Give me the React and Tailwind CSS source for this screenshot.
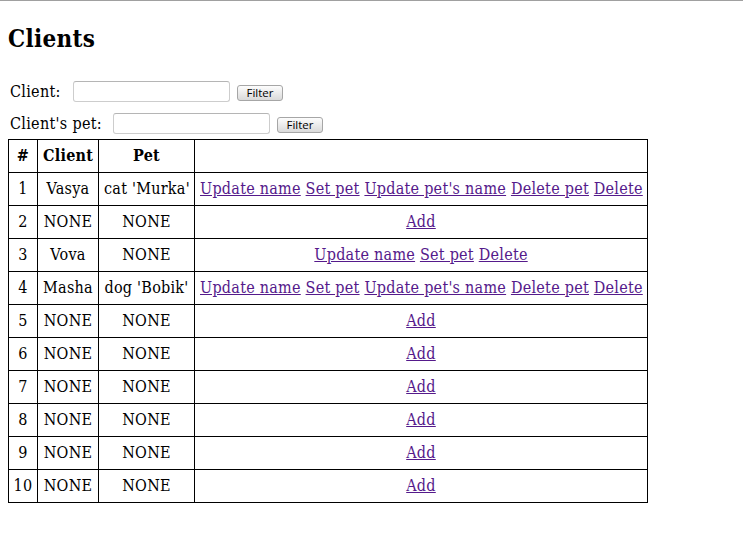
const rows = [
  { id: 1, client: 'Vasya', pet: "cat 'Murka'", actions: ['Update name', 'Set pet', "Update pet's name", 'Delete pet', 'Delete'] },
  { id: 2, client: 'NONE', pet: 'NONE', actions: ['Add'] },
  { id: 3, client: 'Vova', pet: 'NONE', actions: ['Update name', 'Set pet', 'Delete'] },
  { id: 4, client: 'Masha', pet: "dog 'Bobik'", actions: ['Update name', 'Set pet', "Update pet's name", 'Delete pet', 'Delete'] },
  { id: 5, client: 'NONE', pet: 'NONE', actions: ['Add'] },
  { id: 6, client: 'NONE', pet: 'NONE', actions: ['Add'] },
  { id: 7, client: 'NONE', pet: 'NONE', actions: ['Add'] },
  { id: 8, client: 'NONE', pet: 'NONE', actions: ['Add'] },
  { id: 9, client: 'NONE', pet: 'NONE', actions: ['Add'] },
  { id: 10, client: 'NONE', pet: 'NONE', actions: ['Add'] },
];

const cell = 'border border-black px-[5px] py-[5px] leading-[22px] text-center whitespace-nowrap tracking-[0.25px]';

const FilterRow = ({ label, labelW, className = '' }) => (
  <div className={'flex items-center h-[21px] ' + className}>
    <label className="ml-[2px] text-[16px] shrink-0 tracking-[0.3px]" style={{ width: labelW }}>{label}</label>
    <input
      type="text"
      className="w-[157px] h-[21px] border border-[#cdcdcd] border-t-[#b5b5b5] rounded-[3px] bg-white outline-none"
    />
    <button
      className="ml-[7px] mt-[3px] w-[46px] h-[16px] rounded-[3px] border border-[#a6a6a6] bg-gradient-to-b from-[#fdfdfd] to-[#dadada] text-[11.5px] leading-[14px] text-black"
      style={{ fontFamily: '"Open Sans", "Noto Sans", sans-serif', fontStretch: 'normal' }}
    >
      Filter
    </button>
  </div>
);

export default function App() {
  return (
    <div
      className="min-h-[546px] border-t border-[#a0a0a0] bg-white text-black"
      style={{ fontFamily: '"DejaVu Serif Condensed", "DejaVu Serif", serif', fontStretch: 'condensed' }}
    >
      <div className="px-[8px] pt-[23px]">
        <h2 className="text-[24px] font-bold leading-[30px] mb-[27px] tracking-[0.3px]">Clients</h2>

        <FilterRow label="Client:" labelW={63} className="mb-[11px]" />
        <FilterRow label="Client's pet:" labelW={103} />

        <table className="border-collapse table-fixed text-[16px] mt-[5px]" style={{ width: 640 }}>
          <colgroup>
            <col style={{ width: 29 }} />
            <col style={{ width: 61 }} />
            <col style={{ width: 96 }} />
            <col />
          </colgroup>
          <thead>
            <tr>
              <th className={cell}>#</th>
              <th className={cell}>Client</th>
              <th className={cell}>Pet</th>
              <th className={cell}></th>
            </tr>
          </thead>
          <tbody>
            {rows.map((r) => (
              <tr key={r.id}>
                <td className={cell + ' !px-0'}>{r.id}</td>
                <td className={cell}>{r.client}</td>
                <td className={cell}>{r.pet}</td>
                <td className={cell}>
                  {r.actions.map((a, i) => (
                    <span key={a}>
                      {i > 0 && ' '}
                      <a href="#" className="text-[#551a8b] underline">{a}</a>
                    </span>
                  ))}
                </td>
              </tr>
            ))}
          </tbody>
        </table>
      </div>
    </div>
  );
}
